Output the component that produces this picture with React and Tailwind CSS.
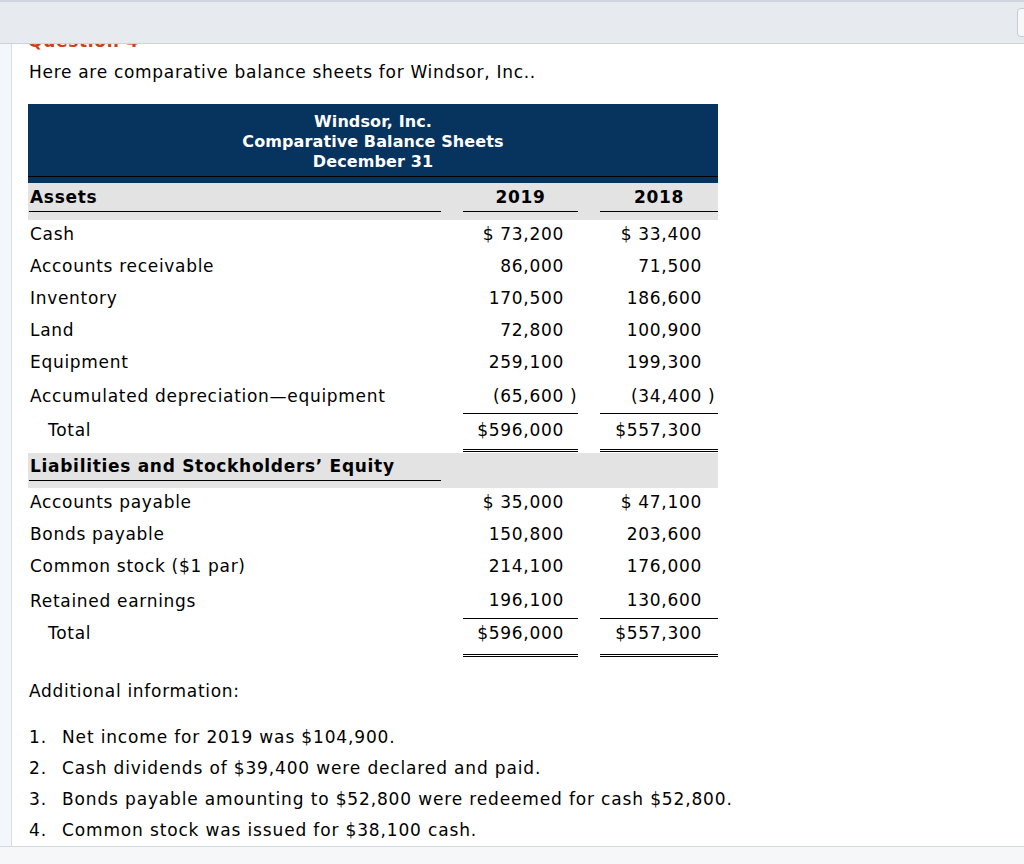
import React from 'react';

const cols = 'grid grid-cols-[413px_22px_115px_22px_118px]';

const assets = [
    ['Cash', '$ 73,200', '$ 33,400'],
    ['Accounts receivable', '86,000', '71,500'],
    ['Inventory', '170,500', '186,600'],
    ['Land', '72,800', '100,900'],
    ['Equipment', '259,100', '199,300'],
];

const liabilities = [
    ['Accounts payable', '$ 35,000', '$ 47,100'],
    ['Bonds payable', '150,800', '203,600'],
    ['Common stock ($1 par)', '214,100', '176,000'],
];

const notes = [
    'Net income for 2019 was $104,900.',
    'Cash dividends of $39,400 were declared and paid.',
    'Bonds payable amounting to $52,800 were redeemed for cash $52,800.',
    'Common stock was issued for $38,100 cash.',
];

function Amount({ value, neg }) {
    return (
        <span className="whitespace-nowrap">
            {neg ? `(${value}` : value}
            {neg && <span className="inline-block w-0 whitespace-pre">{' )'}</span>}
        </span>
    );
}

function Row({ label, a, b, negA, negB, lineBelow, h = 'h-[32px] pb-[2px]' }) {
    const line = lineBelow === 'single' ? 'border-b border-black' : '';
    return (
        <div className={`${cols} ${h} items-stretch`}>
            <div className="flex items-center pl-[2px]">{label}</div>
            <div />
            <div className={`flex items-center justify-end pr-[14px] ${line}`}>
                <Amount value={a} neg={negA} />
            </div>
            <div />
            <div className={`flex items-center justify-end pr-[16px] ${line}`}>
                <Amount value={b} neg={negB} />
            </div>
        </div>
    );
}

function TotalRow({ a, b, pt }) {
    return (
        <div className={`${cols} h-[38px] leading-[20px]`}>
            <div className={`pl-[20px] ${pt}`}>Total</div>
            <div />
            <div className={`border-b-[3px] border-double border-black pr-[14px] text-right ${pt}`}>{a}</div>
            <div />
            <div className={`border-b-[3px] border-double border-black pr-[16px] text-right ${pt}`}>{b}</div>
        </div>
    );
}

function SectionHead({ title, years, pad }) {
    return (
        <div className={`${cols} bg-[#e3e3e3] ${pad}`}>
            <div className="ml-[1px] border-b border-black pb-[4px] pl-[1px] font-bold leading-[20px]">{title}</div>
            <div />
            <div className={`text-center font-bold leading-[20px] pb-[4px] ${years ? 'border-b border-black' : ''}`}>{years ? '2019' : ''}</div>
            <div />
            <div className={`text-center font-bold leading-[20px] pb-[4px] ${years ? 'border-b border-black' : ''}`}>{years ? '2018' : ''}</div>
        </div>
    );
}

export default function App() {
    return (
        <div className="relative w-[1024px] h-[864px] overflow-hidden bg-white text-[17px] tracking-[0.7px] text-black font-['DejaVu_Sans','Liberation_Sans',sans-serif]">
            <div className="flex h-[846px]">
                <div className="w-[12px] shrink-0 bg-[#f3f6fa] border-r border-[#d5dee8]" />
                <div className="flex-1 pl-[16px]">
                    <div className="mt-[29px] h-[24px] leading-[24px] font-bold text-[#cf3f1c]">Question 4</div>
                    <p className="mt-[7px] ml-[1px] leading-[24px]">Here are comparative balance sheets for Windsor, Inc..</p>

                    <div className="mt-[20px] w-[690px]">
                        <div className="bg-[#07335f] pb-[6px] text-white">
                            <div className="border-b border-black pt-[8px] pb-[4px] text-center text-[16px] tracking-[0.1px] font-bold leading-[20px]">
                                <div>Windsor, Inc.</div>
                                <div>Comparative Balance Sheets</div>
                                <div>December 31</div>
                            </div>
                        </div>

                        <SectionHead title="Assets" years pad="pt-[4px] pb-[8px]" />
                        {assets.map(([l, a, b]) => (
                            <Row key={l} label={l} a={a} b={b} />
                        ))}
                        <Row label="Accumulated depreciation—equipment" a="65,600" b="34,400" negA negB lineBelow="single" h="h-[34px]" />
                        <TotalRow a="$596,000" b="$557,300" pt="pt-[6px]" />

                        <div className="mt-[1px]">
                            <SectionHead title="Liabilities and Stockholders’ Equity" pad="pt-[3px] pb-[7px]" />
                        </div>
                        {liabilities.map(([l, a, b]) => (
                            <Row key={l} label={l} a={a} b={b} />
                        ))}
                        <Row label="Retained earnings" a="196,100" b="130,600" lineBelow="single" h="h-[35px]" />
                        <TotalRow a="$596,000" b="$557,300" pt="pt-[4px]" />
                    </div>

                    <p className="mt-[22px] ml-[1px] leading-[24px]">Additional information:</p>
                    <ol className="mt-[19px] ml-[1px] tracking-[0.85px]">
                        {notes.map((n, i) => (
                            <li key={i} className="flex leading-[31px]">
                                <span className="w-[33px] shrink-0">{i + 1}.</span>
                                <span>{n}</span>
                            </li>
                        ))}
                    </ol>
                </div>
            </div>
            <div className="h-[18px] border-t border-[#d3dae2] bg-[#f6f7f8]" />

            {/* fixed toolbar over the scrolled content */}
            <div className="absolute left-0 right-0 top-0 h-[44px] border-t-2 border-b border-t-[#cfd5dd] border-b-[#ccd3dc] bg-[#e7ebef]">
                <div className="absolute right-[-10px] top-[6px] h-[29px] w-[17px] rounded-[4px] border border-[#c6ccd4] bg-[#f7f8fa]" />
            </div>
        </div>
    );
}
